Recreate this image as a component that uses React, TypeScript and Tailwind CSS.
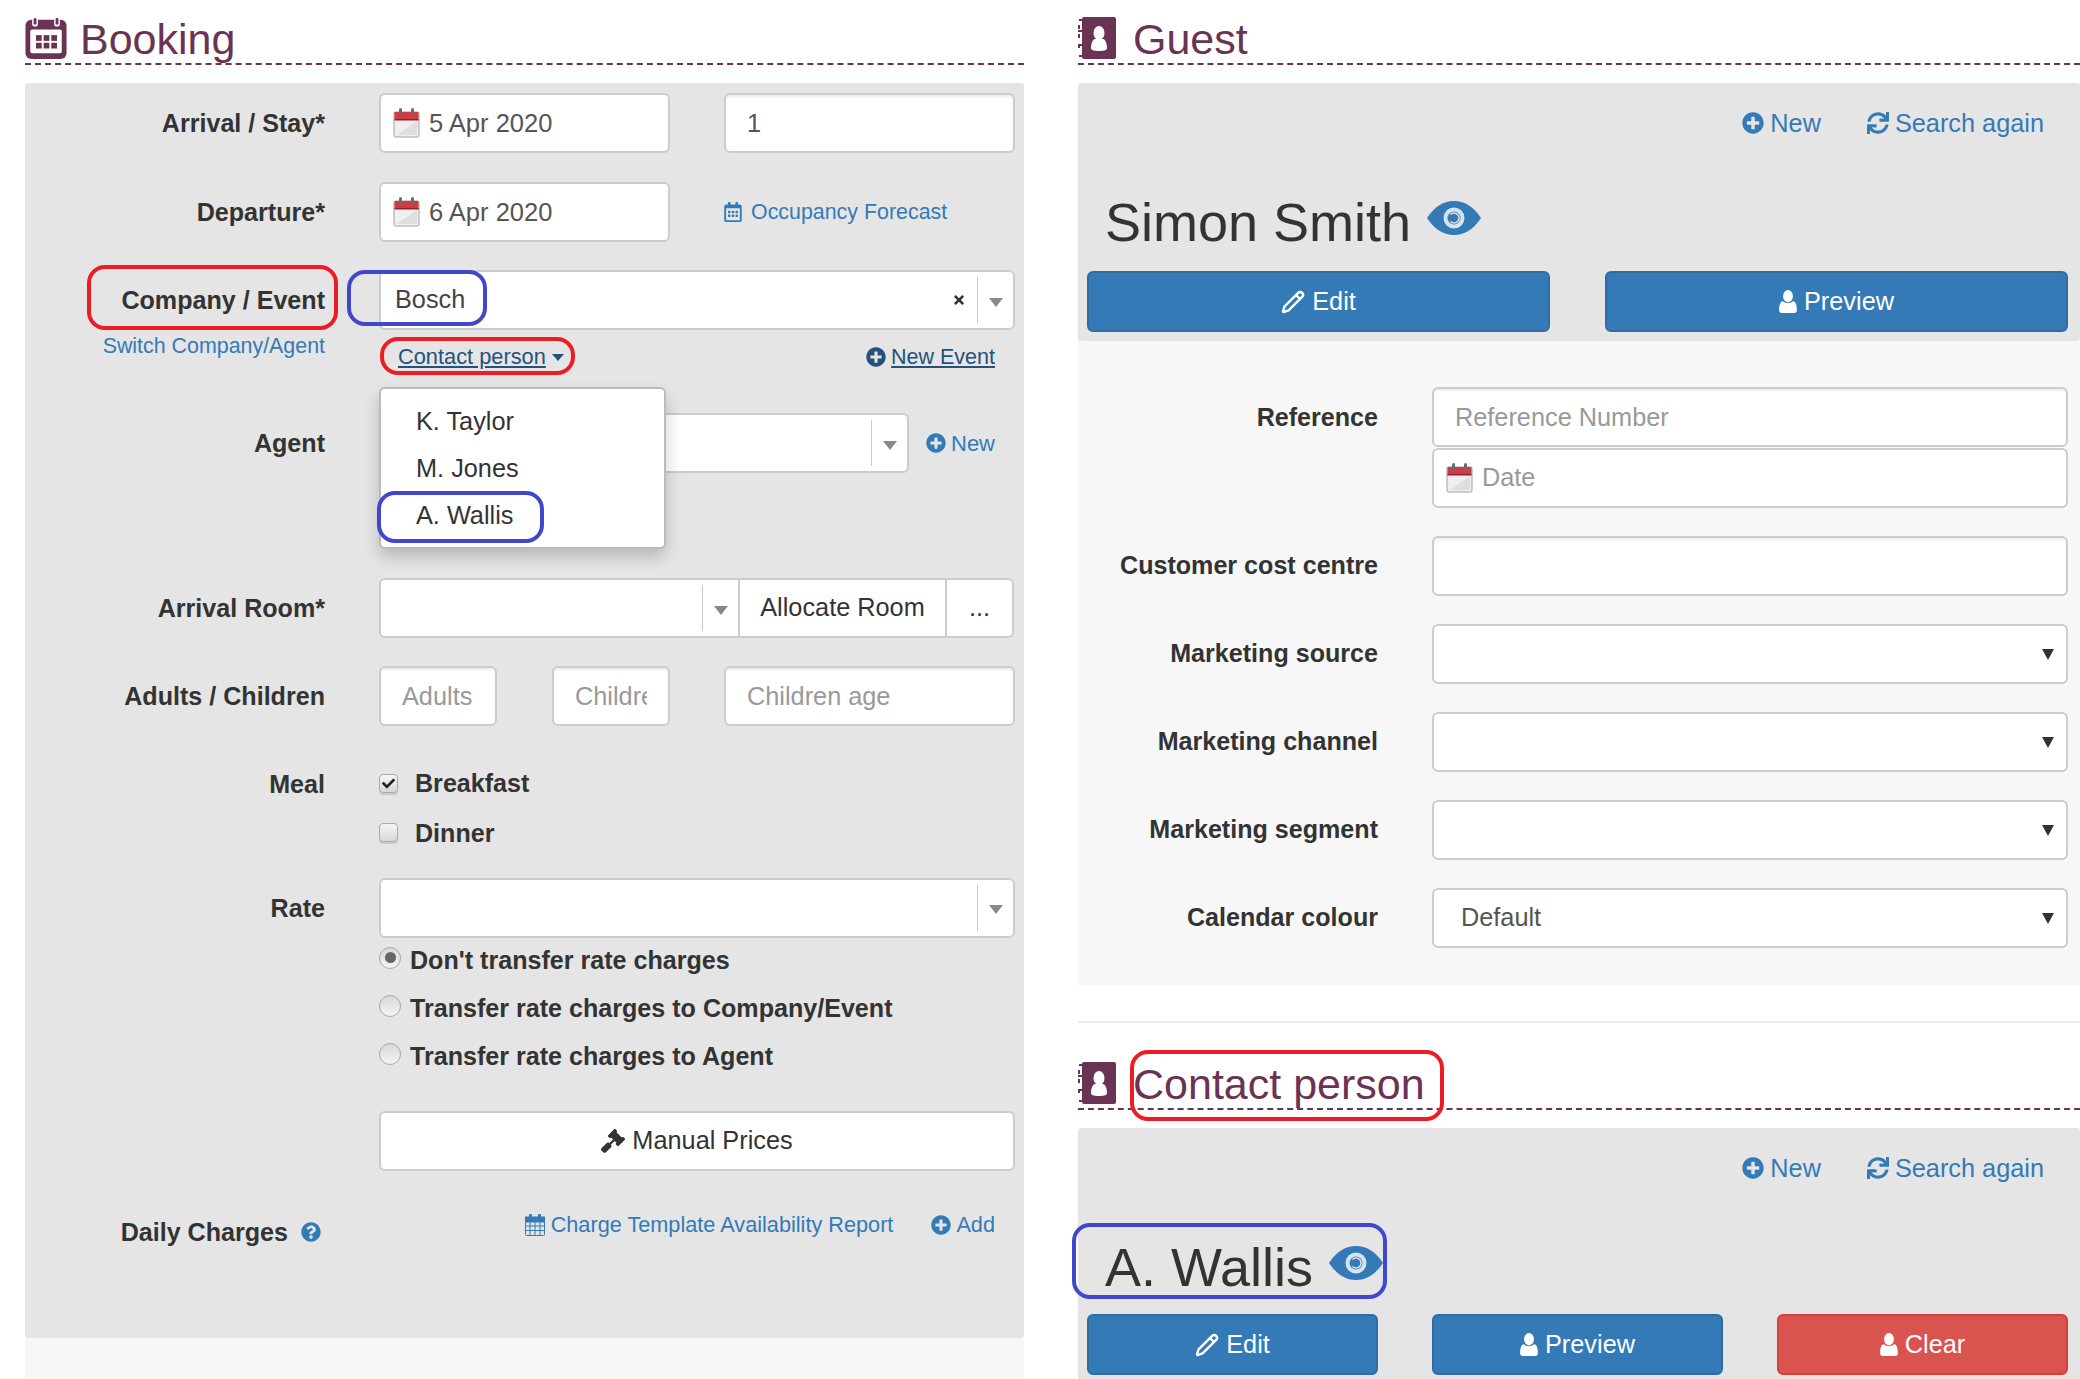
import type { ReactNode } from "react";
import { Pencil } from "lucide-react";
import { FaPlusCircle, FaSync, FaGavel, FaQuestionCircle, FaRegCalendarAlt, FaCheck, FaTimes } from "react-icons/fa";

const inputCls =
  "h-[60px] rounded-[6px] border-2 border-[#ccc] bg-white px-[21px] text-[25.3px] text-[#555] placeholder-[#999] shadow-[inset_0_2px_2px_rgba(0,0,0,0.075)] outline-none";

function CalendarColor({ className }: { className?: string }) {
  return (
    <svg viewBox="0 0 27 30" className={className}>
      <rect x="1" y="4" width="25" height="25" rx="1.5" fill="#f1efee" stroke="#a3a0a0" />
      <path d="M4 27 L24 13 V27Z" fill="#dfdddd" />
      <rect x="1.5" y="4" width="24" height="8" fill="#cf3a45" />
      <rect x="1.5" y="11" width="24" height="1.5" fill="#8e2230" />
      <rect x="6" y="0" width="3" height="8" rx="1.5" fill="#6d6a6a" />
      <rect x="18" y="0" width="3" height="8" rx="1.5" fill="#6d6a6a" />
    </svg>
  );
}

function CalendarBadge() {
  return (
    <svg viewBox="0 0 44 44" className="h-[42px] w-[43px] shrink-0">
      <rect x="0" y="3" width="43" height="41" rx="6" fill="#6b3353" />
      <rect x="7" y="0" width="6" height="10" rx="3" fill="#fff" />
      <rect x="30" y="0" width="6" height="10" rx="3" fill="#fff" />
      <rect x="8.5" y="1" width="3" height="7" rx="1.5" fill="#6b3353" />
      <rect x="31.5" y="1" width="3" height="7" rx="1.5" fill="#6b3353" />
      <rect x="5" y="13" width="33" height="25" rx="2" fill="#fff" />
      {[11, 19, 27].map((x) =>
        [19, 27].map((y) => <rect key={`${x}-${y}`} x={x} y={y} width="6" height="6" fill="#6b3353" />)
      )}
    </svg>
  );
}

function ContactBadge() {
  return (
    <svg viewBox="0 0 38 42" className="h-[42px] w-[38px] shrink-0">
      <rect x="4" y="0" width="34" height="42" rx="2" fill="#6b3353" />
      <path d="M1 3h4M1 39h4M1 8v4M1 17v4M1 27v4" stroke="#6b3353" strokeWidth="2" fill="none" />
      <rect x="0" y="13" width="6" height="2" fill="#6b3353" />
      <rect x="0" y="27" width="6" height="2" fill="#6b3353" />
      <ellipse cx="21" cy="16" rx="5.5" ry="7" fill="#fff" />
      <path d="M13 31c0-5 2-9 4-9h8c2 0 4 4 4 9 0 2-2 3-8 3s-8-1-8-3z" fill="#fff" />
    </svg>
  );
}

function EyeBadge() {
  return (
    <svg viewBox="0 0 54 34" className="h-[34px] w-[54px] shrink-0">
      <path d="M0 17 C8 5 17 0 27 0 C37 0 46 5 54 17 C46 29 37 34 27 34 C17 34 8 29 0 17Z" fill="#337ab7" />
      <circle cx="27" cy="17" r="10.5" fill="#d5e3ef" />
      <circle cx="27" cy="17" r="6.5" fill="#337ab7" />
      <path d="M23.5 13.5a5 5 0 1 1 0 7" stroke="#e5e5e5" strokeWidth="1.5" fill="none" />
    </svg>
  );
}

function UserGlyph({ className }: { className?: string }) {
  return (
    <svg viewBox="0 0 20 26" className={className} fill="currentColor">
      <ellipse cx="10" cy="7" rx="5.5" ry="7" />
      <path d="M0 23c0-6 1-9 4-10.500 1.500 1.500 3.500 2.500 6 2.500s4.500-1 6-2.500c3 1.500 4 4.500 4 10.500 0 2-1 3-3 3H3c-2 0-3-1-3-3z" />
    </svg>
  );
}

function GridCalendar({ className }: { className?: string }) {
  return (
    <svg viewBox="0 0 20 22" className={className} fill="none" stroke="currentColor">
      <rect x="0.500" y="3.500" width="19" height="18" rx="1" />
      <rect x="0" y="3" width="20" height="5" fill="currentColor" />
      <path d="M5 8v13M10 8v13M15 8v13M1 12h18M1 16.500h18" strokeWidth="1" />
      <rect x="4" y="0" width="3" height="5" rx="1" fill="currentColor" stroke="none" />
      <rect x="13" y="0" width="3" height="5" rx="1" fill="currentColor" stroke="none" />
    </svg>
  );
}

function Chosen({ value, clear, className }: { value?: string; clear?: boolean; className?: string }) {
  return (
    <div className={`flex h-[60px] items-center rounded-[6px] border-2 border-[#ccc] bg-white pl-[14px] text-[25.3px] text-[#444] ${className ?? ""}`}>
      <span className="flex-1">{value}</span>
      {clear && <FaTimes className="mr-[11px] text-[14px] text-[#333]" />}
      <span className="flex h-[46px] w-[36px] items-center justify-center border-l border-[#ccc] pt-1">
        <span className="h-0 w-0 border-x-[7px] border-t-[9px] border-x-transparent border-t-[#888]" />
      </span>
    </div>
  );
}

function Row({ label, children, className }: { label: ReactNode; children: ReactNode; className?: string }) {
  return (
    <div className={`flex items-center gap-[54px] pr-[9px] ${className ?? ""}`}>
      <div className="w-[300px] shrink-0 text-right text-[25.1px] font-bold leading-[30px] text-[#333]">{label}</div>
      <div className="min-w-0 flex-1">{children}</div>
    </div>
  );
}

function DateInput({ value }: { value: string }) {
  return (
    <div className="flex h-[60px] w-[291px] items-center rounded-[6px] border-2 border-[#ccc] bg-white pl-[12px] text-[25.5px] text-[#555]">
      <CalendarColor className="h-[30px] w-[27px]" />
      <span className="ml-[9px]">{value}</span>
    </div>
  );
}

function Check({ checked }: { checked?: boolean }) {
  return (
    <span className="flex h-[19px] w-[19px] items-center justify-center rounded-[4px] border border-[#aaa] bg-gradient-to-b from-[#f6f6f6] to-[#d8d8d8] shadow-[0_2px_1px_rgba(0,0,0,0.12)]">
      {checked && <FaCheck className="text-[13px] text-[#222]" />}
    </span>
  );
}

function Radio({ label, checked }: { label: string; checked?: boolean }) {
  return (
    <div className="flex h-[48px] items-center text-[25.1px] font-bold text-[#333]">
      <span className="mb-[6px] flex h-[22px] w-[22px] items-center justify-center rounded-full border border-[#aaa] bg-gradient-to-b from-[#d8d8d8] to-[#f4f4f4]">
        {checked && <span className="h-[11px] w-[11px] rounded-full bg-[#666]" />}
      </span>
      <span className="ml-[9px]">{label}</span>
    </div>
  );
}

function Heading({ icon, title, gap }: { icon: ReactNode; title: string; gap: string }) {
  return (
    <div className={`flex h-[65px] items-end border-b-2 border-dashed border-[#6b3353] pb-[2px] ${gap}`}>
      <span className="mb-[2px]">{icon}</span>
      <span className="mb-[-3px] text-[43px] leading-[50px] text-[#6b3353]">{title}</span>
    </div>
  );
}

function BlueLink({ icon, children, className }: { icon?: ReactNode; children: ReactNode; className?: string }) {
  return (
    <span className={`inline-flex items-center text-[#337ab7] ${className ?? ""}`}>
      {icon}
      {children}
    </span>
  );
}

function ActionBtn({ icon, label, red, className }: { icon: ReactNode; label: string; red?: boolean; className?: string }) {
  return (
    <div
      className={`flex h-[61px] items-center justify-center gap-[7px] rounded-[6px] border-2 text-[25.3px] text-white ${
        red ? "border-[#d43f3a] bg-[#d9534f]" : "border-[#2e6da4] bg-[#337ab7]"
      } ${className ?? ""}`}
    >
      {icon}
      {label}
    </div>
  );
}

function PersonHeader({ name }: { name: string }) {
  return (
    <>
      <div className="flex justify-end gap-[46px] pr-[36px] pt-[25px] leading-[30px]">
        <BlueLink className="gap-[6px] text-[25.3px]" icon={<FaPlusCircle className="text-[22px]" />}>
          New
        </BlueLink>
        <BlueLink className="gap-[6px] text-[25.3px]" icon={<FaSync className="text-[22px]" />}>
          Search again
        </BlueLink>
      </div>
      <div className="mt-[44px] flex h-[80px] items-center gap-[16px] pl-[27px]">
        <span className="text-[54px] leading-[60px] text-[#333]">{name}</span>
        <span className="mb-[8px]">
          <EyeBadge />
        </span>
      </div>
    </>
  );
}

function GuestRow({ label, children }: { label: string; children: ReactNode }) {
  return (
    <div className="flex items-center gap-[54px] pr-[12px]">
      <div className="w-[300px] shrink-0 text-right text-[25.1px] font-bold text-[#333]">{label}</div>
      <div className="flex-1">{children}</div>
    </div>
  );
}

function NativeSelect({ value }: { value?: string }) {
  return (
    <div className="flex h-[60px] items-center rounded-[6px] border-2 border-[#ccc] bg-white pl-[27px] pr-[12px] text-[25.3px] text-[#555]">
      <span className="flex-1">{value}</span>
      <span className="h-0 w-0 border-x-[6.500px] border-t-[11px] border-x-transparent border-t-[#333]" />
    </div>
  );
}

function Mark({ className }: { className: string }) {
  return <div className={`pointer-events-none absolute z-20 rounded-[18px] border-[4px] ${className}`} />;
}

export default function App() {
  return (
    <div className="relative flex h-[1379px] w-[2080px] gap-[54px] overflow-hidden bg-white pl-[25px] font-['Liberation_Sans',Arial,sans-serif]">
      {/* Booking */}
      <div className="w-[999px] shrink-0">
        <Heading icon={<CalendarBadge />} title="Booking" gap="gap-[12px]" />
        <div className="mt-[18px] bg-[#f7f7f7]">
          <div className="flex h-[1255px] flex-col rounded-[4px] bg-[#e5e5e5] pt-[10px]">
            <Row label="Arrival / Stay*">
              <div className="flex gap-[54px]">
                <DateInput value="5 Apr 2020" />
                <input readOnly defaultValue="1" className={`${inputCls} w-[291px]`} />
              </div>
            </Row>
            <Row label="Departure*" className="mt-[29px]">
              <div className="flex items-center gap-[53px]">
                <DateInput value="6 Apr 2020" />
                <BlueLink className="gap-[8px] text-[21.4px]" icon={<FaRegCalendarAlt className="text-[20px]" />}>
                  Occupancy Forecast
                </BlueLink>
              </div>
            </Row>
            <Row label="Company / Event" className="mt-[28px]">
              <Chosen value="Bosch" clear />
            </Row>
            <div className="flex h-[83px] gap-[54px] pr-[29px]">
              <div className="w-[300px] text-right text-[21.4px] text-[#337ab7]">Switch Company/Agent</div>
              <div className="flex h-[54px] flex-1 items-center justify-between pl-[19px]">
                <span className="inline-flex items-center gap-[6px] text-[21.8px] text-[#23527c] underline">
                  Contact person
                  <span className="h-0 w-0 border-x-[6.500px] border-t-[7px] border-x-transparent border-t-[#23527c]" />
                </span>
                <span className="inline-flex items-center gap-[5px] text-[21.5px] text-[#23527c] underline">
                  <FaPlusCircle className="text-[20px]" />
                  New Event
                </span>
              </div>
            </div>
            <Row label="Agent">
              <div className="relative flex items-center gap-[17px]">
                <Chosen className="w-[530px]" />
                <BlueLink className="gap-[5px] text-[22px]" icon={<FaPlusCircle className="text-[20px]" />}>
                  New
                </BlueLink>
                {/* contact person menu */}
                <div className="absolute left-0 top-[-26px] z-10 flex h-[162px] w-[287px] flex-col rounded-[6px] border-2 border-[#bbb] bg-white pl-[35px] pt-[9px] text-[25.3px] leading-[47px] text-[#333] shadow-[0_8px_16px_rgba(0,0,0,0.2)]">
                  <span>K. Taylor</span>
                  <span>M. Jones</span>
                  <span>A. Wallis</span>
                </div>
              </div>
            </Row>
            <Row label="Arrival Room*" className="mt-[105px]">
              <div className="flex">
                <Chosen className="w-[361px] rounded-r-none" />
                <div className="flex h-[60px] w-[207px] items-center justify-center border-2 border-l-0 border-[#ccc] bg-white text-[25.3px] text-[#333]">
                  Allocate Room
                </div>
                <div className="flex h-[60px] w-[67px] items-center justify-center rounded-r-[6px] border-2 border-l-0 border-[#ccc] bg-white text-[25.3px] text-[#333]">
                  ...
                </div>
              </div>
            </Row>
            <Row label="Adults / Children" className="mt-[28px]">
              <div className="flex">
                <input readOnly placeholder="Adults" className={`${inputCls} w-[118px]`} />
                <input readOnly placeholder="Children" className={`${inputCls} ml-[55px] w-[118px]`} />
                <input readOnly placeholder="Children age" className={`${inputCls} ml-[54px] w-[291px]`} />
              </div>
            </Row>
            <Row label="Meal" className="mt-[39px]">
              <div className="flex items-center gap-[17px] text-[25.1px] font-bold text-[#333]">
                <Check checked />
                Breakfast
              </div>
            </Row>
            <div className="mt-[15px] flex items-center gap-[17px] pl-[354px] text-[25.1px] font-bold leading-[30px] text-[#333]">
              <Check />
              Dinner
            </div>
            <Row label="Rate" className="mt-[30px]">
              <Chosen />
            </Row>
            <div className="mt-[-1px] pl-[354px]">
              <Radio label="Don't transfer rate charges" checked />
              <Radio label="Transfer rate charges to Company/Event" />
              <Radio label="Transfer rate charges to Agent" />
            </div>
            <div className="ml-[354px] mr-[9px] mt-[30px] flex h-[60px] items-center justify-center gap-[7px] rounded-[6px] border-2 border-[#ccc] bg-white text-[25.3px] text-[#333]">
              <FaGavel className="text-[24px]" />
              Manual Prices
            </div>
            <div className="mt-[38px] flex items-start pr-[29px]">
              <div className="mt-[5px] flex w-[299px] items-center justify-end gap-[13px] pr-[3px] text-[25.1px] font-bold text-[#333]">
                Daily Charges
                <FaQuestionCircle className="text-[20px] text-[#337ab7]" />
              </div>
              <div className="flex flex-1 justify-end gap-[38px]">
                <BlueLink className="gap-[6px] text-[21.7px]" icon={<GridCalendar className="h-[22px] w-[20px]" />}>
                  Charge Template Availability Report
                </BlueLink>
                <BlueLink className="gap-[5px] text-[21.7px]" icon={<FaPlusCircle className="text-[20px]" />}>
                  Add
                </BlueLink>
              </div>
            </div>
          </div>
          <div className="h-[41px]" />
        </div>
      </div>

      {/* Guest + contact person */}
      <div className="flex-1">
        <Heading icon={<ContactBadge />} title="Guest" gap="gap-[17px]" />
        <div className="mt-[18px] bg-[#f7f7f7]">
          <div className="h-[258px] rounded-[4px] bg-[#e5e5e5]">
            <PersonHeader name="Simon Smith" />
            <div className="flex gap-[55px] pl-[9px] pr-[12px] pt-[9px]">
              <ActionBtn className="flex-1" icon={<Pencil size={24} strokeWidth={2.4} />} label="Edit" />
              <ActionBtn className="flex-1" icon={<UserGlyph className="h-[23px] w-[18px]" />} label="Preview" />
            </div>
          </div>
          <div className="flex h-[644px] flex-col gap-[28px] pt-[46px]">
            <div className="flex gap-[54px] pr-[12px]">
              <div className="w-[300px] shrink-0 pt-[12px] text-right text-[25.1px] font-bold text-[#333]">Reference</div>
              <div className="flex-1">
                <input readOnly placeholder="Reference Number" className={`${inputCls} w-full`} />
                <div className="mt-[1px] flex h-[60px] items-center rounded-[6px] border-2 border-[#ccc] bg-white pl-[12px] text-[25.3px] text-[#999]">
                  <CalendarColor className="h-[30px] w-[27px]" />
                  <span className="ml-[9px]">Date</span>
                </div>
              </div>
            </div>
            <GuestRow label="Customer cost centre">
              <input readOnly className={`${inputCls} w-full`} />
            </GuestRow>
            <GuestRow label="Marketing source">
              <NativeSelect />
            </GuestRow>
            <GuestRow label="Marketing channel">
              <NativeSelect />
            </GuestRow>
            <GuestRow label="Marketing segment">
              <NativeSelect />
            </GuestRow>
            <GuestRow label="Calendar colour">
              <NativeSelect value="Default" />
            </GuestRow>
          </div>
        </div>
        <div className="mt-[36px] h-[2px] bg-[#eee]" />
        <div className="mt-[22px]">
          <Heading icon={<ContactBadge />} title="Contact person" gap="gap-[17px]" />
        </div>
        <div className="mt-[18px] h-[260px] rounded-[4px] bg-[#e5e5e5]">
          <PersonHeader name="A. Wallis" />
          <div className="flex gap-[54px] pl-[9px] pr-[12px] pt-[7px]">
            <ActionBtn className="flex-1" icon={<Pencil size={24} strokeWidth={2.4} />} label="Edit" />
            <ActionBtn className="flex-1" icon={<UserGlyph className="h-[23px] w-[18px]" />} label="Preview" />
            <ActionBtn className="flex-1" red icon={<UserGlyph className="h-[23px] w-[18px]" />} label="Clear" />
          </div>
        </div>
      </div>

      {/* hand-drawn annotations */}
      <Mark className="left-[87px] top-[265px] h-[65px] w-[251px] border-[#ed1c24]" />
      <Mark className="left-[347px] top-[270px] h-[56px] w-[140px] border-[#3f48cc]" />
      <Mark className="left-[380px] top-[337px] h-[38px] w-[195px] border-[#ed1c24]" />
      <Mark className="left-[377px] top-[491px] h-[52px] w-[167px] border-[#3f48cc]" />
      <Mark className="left-[1130px] top-[1050px] h-[71px] w-[314px] border-[#ed1c24]" />
      <Mark className="left-[1072px] top-[1223px] h-[76px] w-[315px] border-[#3f48cc]" />
    </div>
  );
}
